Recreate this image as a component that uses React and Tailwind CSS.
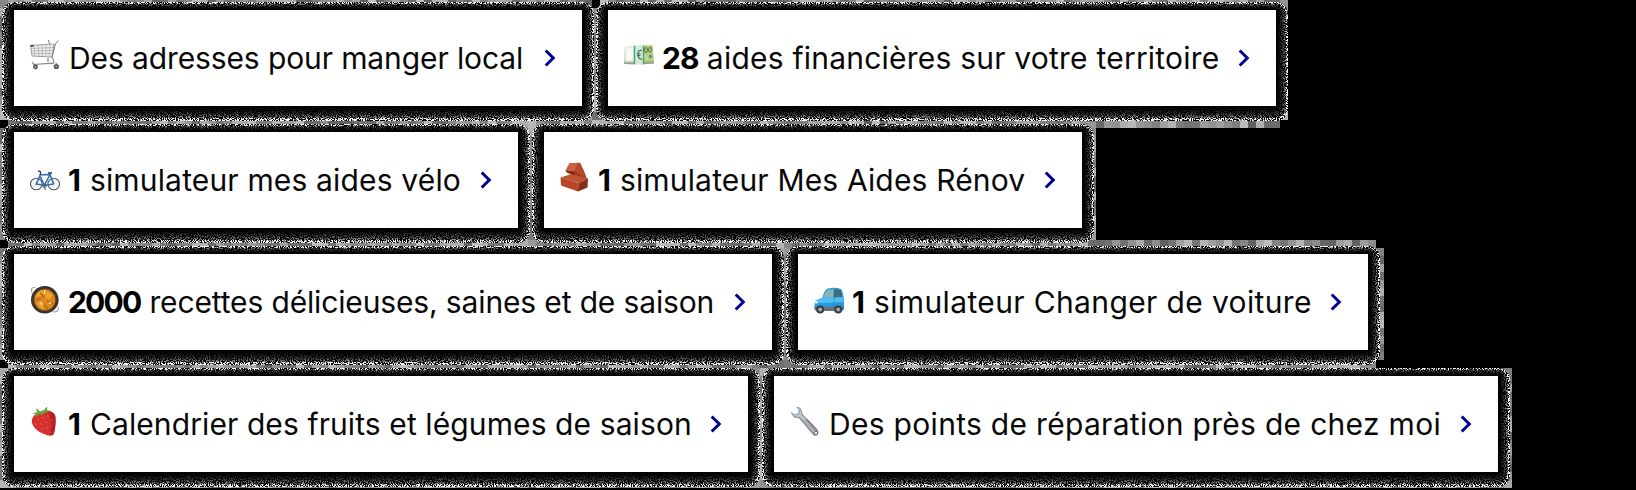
const OUT = 12;

const CartIcon = () => (
  <svg viewBox="0 0 30 30" className="size-[30px]" fill="none">
    <path d="M0.5 5.5 L24 4 L22 17 L2 16 Z" fill="#f1f1f1" stroke="#858585" strokeWidth=".8" />
    <path d="M4 5.5 L5 16 M8 5 L9 16.3 M12 5 L12.5 16.5 M16 5 L16 16.5 M20 4.5 L19 17 M1 8.5 L23.5 7.5 M1.3 11 L23 10.5 M1.7 13.5 L22.7 13.5" stroke="#a3a3a3" strokeWidth=".7" />
    <path d="M28.5 0.5 L25.5 3.5 L22 17 Q24 20 24 23 M18.5 0 L19.5 4" stroke="#777" strokeWidth="1" />
    <path d="M18 18 L18 22 M24 23.2 L3 24.5 M2 22 L5 26 M26 23 L27 26" stroke="#858585" strokeWidth="1.2" />
    <circle cx="5.5" cy="27" r="2.4" fill="#555" /><circle cx="26.3" cy="26.5" r="2.6" fill="#555" />
    <circle cx="5.5" cy="27" r="1" fill="#aaa" /><circle cx="26.3" cy="26.5" r="1" fill="#aaa" />
    <path d="M0.5 5.8h3" stroke="#222" strokeWidth="1.5" />
  </svg>
);

const MoneyIcon = () => (
  <svg viewBox="0 0 30 30" className="size-[30px]">
    <path d="M1 5 L28.5 4.5 L30 22 Q20 24 15 23 Q6 24 0 22.5 Z" fill="#a9b59a" />
    <path d="M1 5 H11 V21.5 H0.5 Z" fill="#e9eee6" /><path d="M3 7 H8 Q10 10 8 19 H2.5Z" fill="#f8faf5" />
    <path d="M19 4.5 H28.5 L29.5 20.5 L19 21.5 Z" fill="#b9ce7c" />
    <path d="M0 21 H30 M0 22.5 H30" stroke="#819078" strokeWidth=".6" />
    <path d="M10.5 5 H20 V23.3 H10.5 Z" fill="#d8e8d7" />
    <path d="M10.5 5V23.3 M19.5 5V23.3" stroke="#35a983" strokeWidth="1.4" />
    <path d="M18 9.5 Q13.5 8.5 14 14 Q14.2 18.5 18 18 M13 12.8h3.5 M13 14.7h3.5" fill="none" stroke="#487562" strokeWidth="1.3" />
    <ellipse cx="22" cy="9" rx="1.6" ry="2.4" fill="none" stroke="#3f5b36" strokeWidth=".8" /><ellipse cx="26" cy="8.8" rx="1.5" ry="2.4" fill="none" stroke="#3f5b36" strokeWidth=".8" />
    <circle cx="26.5" cy="15.5" r="1.8" fill="#4f98b9" /><path d="M21 14 L23.5 19" stroke="#e9d46b" strokeWidth="1.5" />
  </svg>
);

const BikeIcon = () => (
  <svg viewBox="0 0 30 30" className="size-[30px]" fill="none">
    <g stroke="#4b5056" strokeWidth="1.1"><circle cx="6.3" cy="22" r="5.8" /><circle cx="23.7" cy="22" r="5.8" /></g>
    <g stroke="#c3c7cc" strokeWidth=".5"><path d="M6.3 16.5v11M1 22h11M2.5 18l7.6 8M10 18l-7.6 8M23.7 16.5v11M18.3 22h11M20 18l7.6 8M27.5 18l-7.6 8" /></g>
    <path d="M6.3 22 L10.3 12.8 L20 12.5 L14.3 23.5 Z M10.5 14.5 L14.3 23.5 M20 12.5 L23.7 22 M14.3 23.5 L23.7 22" stroke="#2c6fb2" strokeWidth="1.5" />
    <path d="M8 9.3 Q11.5 8.5 10.2 12.5 M18 11 H22" stroke="#333" strokeWidth="1.3" />
    <circle cx="14.5" cy="23.8" r="1.8" stroke="#555" strokeWidth=".9" /><path d="M14 24l1.5 4" stroke="#555" />
  </svg>
);

const BrickIcon = () => (
  <svg viewBox="0 0 30 30" className="size-[30px]">
    <path d="M9.5 1.2 L20 0.7 L24 9 L27 17 L18 17 L5.5 9 Z" fill="#a13c20" />
    <path d="M9.5 1.2 L17.5 1 L15 9.5 L5.5 8.8 Z" fill="#cf6040" />
    <path d="M17.5 1 L20 1 L26.5 16 L15 9.5 Z" fill="#b54929" />
    <path d="M5.5 9 L15 9.7 L14 13 L7 10.8 Z" fill="#7f2b16" />
    <path d="M0.5 15.5 L10.5 12.2 L28 16.5 L18.5 21 Z" fill="#c05233" />
    <path d="M0.5 15.5 L18.5 21 L18 29.5 L1 23.5 Z" fill="#b84626" />
    <path d="M18.5 21 L28 16.5 L27.5 25.5 L18 29.5 Z" fill="#84301b" />
  </svg>
);

const PanIcon = () => (
  <svg viewBox="0 0 30 30" className="size-[30px]">
    <path d="M2 8 Q0 2 5.5 2.2 M23 27 Q29.5 27 28 21.5" fill="none" stroke="#9a9a9a" strokeWidth="1.1" />
    <circle cx="14.8" cy="14.8" r="13.8" fill="#393431" /><circle cx="14.8" cy="14.8" r="10.8" fill="#d8861d" />
    <path d="M5 12 Q8 6 13 5 L12 11 Z M16 6 L23 10 L19 15 L15 12 Z M7 18 L13 16 L14 24 Q9 23 7 18Z" fill="#eda42c" />
    <path d="M6 15 L11 13 M17 16 L23 18 M14 20 L18 24 M10 8 L14 12" stroke="#b9600f" strokeWidth="1.3" />
    <path d="M15 5 L14 9 M10 17 L12 20 M19 19 L21 17" stroke="#ffe59a" strokeWidth="1.3" />
    <circle cx="14.8" cy="14.8" r="10.9" fill="none" stroke="#79420f" strokeWidth=".8" />
  </svg>
);

const CarIcon = () => (
  <svg viewBox="0 0 30 30" className="size-[30px]">
    <path d="M1 15 L8.5 12 Q10 3.5 14 2.5 Q21 1 27 3 Q29 5 30 14 L30 23 Q29 25 26 25 H3 Q0 24 .5 20 Z" fill="#279be1" />
    <path d="M1 15 L8 11.5 H29.5 V16 Q15 17 1 17Z" fill="#55bdf2" />
    <path d="M9.5 11.5 Q11.5 4.5 14.5 3.8 L20 3.3 L19.5 11.3 Z" fill="#8bb4b8" />
    <path d="M21 3.3 L25.5 3.8 Q27.5 6 28 11 H20.5Z" fill="#4c6972" />
    <path d="M20.3 3 V11.5 M26 4 L27 11" stroke="#165e91" strokeWidth=".8" />
    <path d="M20.3 11.5 V21" stroke="#1f85c6" strokeWidth=".6" />
    <path d="M.5 21 L30 20.5 V23 Q29 25 27 25 H3 Q1 25 .5 23Z" fill="#68717a" />
    <rect x="1" y="15" width="3" height="2.5" rx="1" fill="#e6f8ff" />
    <circle cx="6.2" cy="23.5" r="4" fill="#383b40" /><circle cx="24.2" cy="23.5" r="4" fill="#383b40" />
    <circle cx="6.2" cy="23.5" r="2" fill="#a3a8ae" /><circle cx="24.2" cy="23.5" r="2" fill="#a3a8ae" />
  </svg>
);

const StrawberryIcon = () => (
  <svg viewBox="0 0 30 30" className="size-[30px]">
    <path d="M2.5 12 Q5 7 12 6 Q20 2.5 24.5 8 Q26 10 25.5 17 Q25 26 23 29 Q20 31 13 27.5 Q4 24 2 17 Q1.5 14 2.5 12Z" fill="#d5302d" />
    <path d="M18 5 Q27 6 25.5 17 Q25 26 23 29 L19 29 Q24 17 18 5Z" fill="#b51f25" />
    <path d="M1.5 11 L6 8 L2 7.5 L7 6.2 L6 2 L10 5.5 L14 4 L17 .5 L17 4 L20 5 L14 7 L12 9 L9 8 L7 11 L6 9Z" fill="#66a043" />
    <g fill="#f3a36a"><circle cx="8" cy="13.5" r=".6" /><circle cx="13" cy="12" r=".6" /><circle cx="18" cy="10" r=".6" /><circle cx="5.5" cy="18" r=".6" /><circle cx="11" cy="18" r=".6" /><circle cx="16.5" cy="16.5" r=".6" /><circle cx="22" cy="14" r=".6" /><circle cx="12" cy="23" r=".6" /><circle cx="17" cy="22" r=".6" /><circle cx="21" cy="20" r=".6" /><circle cx="20" cy="26" r=".6" /></g>
  </svg>
);

const WrenchIcon = () => (
  <svg viewBox="0 0 30 30" className="size-[30px]">
    <path d="M6 .8 Q12 .5 12.5 8 L28 24.5 Q29.5 28 27 29.5 Q25 30.5 23 29 L9 12.3 Q2 12.5 .8 5.5 L4.5 8.5 L8.5 7 L8.5 3.5Z" fill="#8e989e" />
    <path d="M8 1.8 Q11.5 3 11.2 8.5 L16 13.5 L14 15 L9.5 10.8 Q4.5 11.5 2 7.5 L5 9.3 L9.5 7.8 L9.8 4Z" fill="#bdc9ce" />
    <path d="M14 14 L24.5 26" stroke="#c5bcbb" strokeWidth="1.5" />
    <path d="M17 13 L27.5 24.3" stroke="#70686a" strokeWidth="1" />
    <circle cx="26" cy="27" r="1.6" fill="#fff" stroke="#665b5b" strokeWidth=".8" />
  </svg>
);

const ROWS = [
  [
    { w: "w-[568px]", x: 14, y: 10, width: 568, Icon: CartIcon, top: "top-[-3px]", text: "Des adresses pour manger local", ml: "ml-[9px]", track: "tracking-[-0.11px]" },
    { w: "w-[668px]", x: 608, y: 10, width: 668, Icon: MoneyIcon, top: "top-[-2px]", count: "28", countTrack: "tracking-[-0.8px]", text: "aides financières sur votre territoire", ml: "ml-[8px]", track: "tracking-[0.22px]" },
  ],
  [
    { w: "w-[504px]", x: 14, y: 132, width: 504, Icon: BikeIcon, top: "top-[-3px]", count: "1", text: "simulateur mes aides vélo", ml: "ml-[9px]", track: "tracking-[0.16px]" },
    { w: "w-[538px]", x: 544, y: 132, width: 538, Icon: BrickIcon, top: "top-[-3px]", count: "1", text: "simulateur Mes Aides Rénov", ml: "ml-[9px]", track: "tracking-[0.16px]" },
  ],
  [
    { w: "w-[758px]", x: 14, y: 254, width: 758, Icon: PanIcon, top: "top-[-2px]", count: "2000", countTrack: "tracking-[-1.8px]", text: "recettes délicieuses, saines et de saison", ml: "ml-[9px]", track: "tracking-[-0.14px]" },
    { w: "w-[570px]", x: 798, y: 254, width: 570, Icon: CarIcon, top: "top-[-1px]", count: "1", text: "simulateur Changer de voiture", ml: "ml-[9px]", track: "tracking-[0.37px]" },
  ],
  [
    { w: "w-[734px]", x: 14, y: 376, width: 734, Icon: StrawberryIcon, top: "top-[-3px]", count: "1", text: "Calendrier des fruits et légumes de saison", ml: "ml-[9px]", track: "tracking-[0.1px]" },
    { w: "w-[724px]", x: 774, y: 376, width: 724, Icon: WrenchIcon, top: "top-[-3px]", text: "Des points de réparation près de chez moi", ml: "ml-[9px]", track: "tracking-[0.3px]" },
  ],
];

// Areas of the 8px mosaic behind the grainy shadows: x, y, width, height.
const MOSAIC = [
  [0, 0, 1288, 120], [8, 120, 1272, 8], [0, 128, 1096, 112], [8, 240, 1368, 8],
  [0, 248, 1384, 112], [8, 360, 1368, 8], [0, 368, 1512, 120],
];

function mosaicTiles() {
  const tiles = [];
  let seed = 7;
  for (const [x, y, w, h] of MOSAIC)
    for (let j = y; j < y + h; j += 8)
      for (let i = x; i < x + w; i += 8) {
        seed = (seed * 16807) % 2147483647;
        const g = 96 + (seed % 95);
        tiles.push(<rect key={i + "-" + j} x={i} y={j} width="8" height="8" fill={`rgb(${g},${g},${g})`} />);
      }
  tiles.push(<rect key="gap" x="592" y="0" width="8" height="8" fill="#000" />);
  tiles.push(<rect key="join" x="1088" y="122" width="8" height="6" fill="#999" />);
  return tiles;
}

function GrainShadows() {
  const steps = Array.from({ length: OUT }, (_, i) => 1 - i / OUT);
  return (
    <svg className="absolute inset-0 -z-10" width="1636" height="490" aria-hidden="true">
      <filter id="grain" x="0" y="0" width="1636" height="490" filterUnits="userSpaceOnUse" colorInterpolationFilters="sRGB">
        <feTurbulence type="fractalNoise" baseFrequency="0.93" numOctaves="2" seed="4" />
        <feColorMatrix values="6 0 0 0 -2.7  6 0 0 0 -2.7  6 0 0 0 -2.7  0 0 0 0 1" result="n" />
        <feComposite in="n" in2="SourceGraphic" operator="arithmetic" k1="2" result="m" />
        <feComposite in="m" in2="SourceAlpha" operator="in" />
      </filter>
      <g shapeRendering="crispEdges">{mosaicTiles()}</g>
      <g filter="url(#grain)">
        {ROWS.flat().map((c) =>
          steps.map((t) => {
            const g = Math.round(t > 0.85 ? 255 : 115 * t * t);
            return (
              <rect key={c.text + t} x={c.x - 12 * t} y={c.y - 8 * t} width={c.width + 24 * t} height={96 + 23 * t} rx={12 * t} fill={`rgb(${g},${g},${g})`} />
            );
          })
        )}
      </g>
    </svg>
  );
}

function Card({ w, Icon, top, count, countTrack = "", text, ml, track }) {
  return (
    <a className={`${w} flex h-24 shrink-0 items-center bg-white pr-[26px] pl-4 text-[30px] leading-[48px] whitespace-nowrap text-[#080808]`}>
      <span className={`relative shrink-0 ${top}`}><Icon /></span>
      {count && <strong className={`ml-2 font-bold text-black ${countTrack}`}>{count}</strong>}
      <span className={`${ml} ${track}`}>{text}</span>
      <svg viewBox="0 0 12 18" className="ml-auto h-[18px] w-3 shrink-0" fill="none" stroke="#000091" strokeWidth="3">
        <path d="M1.7 1.5 L9.3 9 L1.7 16.5" />
      </svg>
    </a>
  );
}

export default function App() {
  return (
    <main className="relative isolate h-[490px] w-[1636px] overflow-hidden bg-black font-[Inter,sans-serif]">
      <GrainShadows />
      <div className="flex flex-col gap-[26px] pt-[10px] pl-[14px]">
        {ROWS.map((row, i) => (
          <div key={i} className="flex gap-[26px]">
            {row.map((c) => <Card key={c.text} {...c} />)}
          </div>
        ))}
      </div>
    </main>
  );
}
